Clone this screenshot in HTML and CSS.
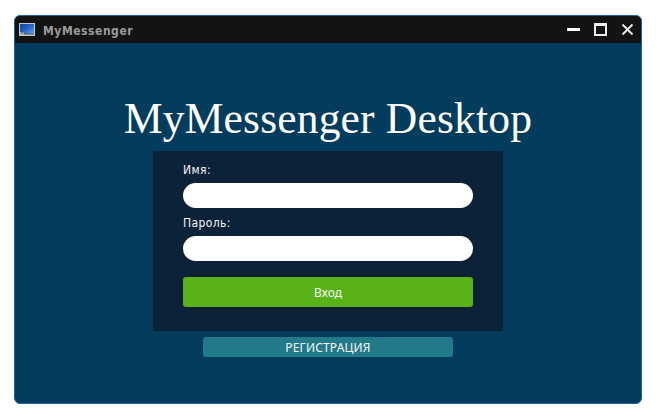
FILE: index.html
```html
<!DOCTYPE html>
<html lang="ru">
<head>
<meta charset="utf-8">
<title>MyMessenger</title>
<link rel="stylesheet" href="styles.css">
</head>
<body>
<main class="window">
  <header class="titlebar">
    <svg class="app-icon" width="16" height="13" viewBox="0 0 16 13">
      <defs><linearGradient id="screen" x1="0" y1="0" x2="1" y2="1"><stop offset="0" stop-color="#123f9c"/><stop offset=".5" stop-color="#2565c5"/><stop offset="1" stop-color="#6fa5e4"/></linearGradient></defs>
      <rect width="16" height="13" fill="#c3cbd0"/>
      <rect x="1" y="1" width="14" height="10" fill="url(#screen)"/>
      <path d="M1 9h3l1 1v2H1z" fill="#a9bcc4"/>
      <path d="M2 10h2M5 11h10" stroke="#3d5263"/>
    </svg>
    <span class="app-name">MyMessenger</span>
    <svg class="controls" width="68" height="14" viewBox="0 0 68 14">
      <path d="M0 5h13v3H0z" fill="#fff"/>
      <path d="M27 0h13v13H27zM29 3v8h9V3z" fill="#eee" fill-rule="evenodd"/>
      <path d="M55.500 1.500l10 10M65.500 1.500l-10 10" stroke="#eee" stroke-width="1.8"/>
    </svg>
  </header>
  <h1 class="heading"><span class="heading-text">MyMessenger Desktop</span></h1>
  <form class="login">
    <label class="label" for="name">Имя:</label>
    <input class="field" id="name" type="text">
    <label class="label" for="password">Пароль:</label>
    <input class="field" id="password" type="password">
    <button class="submit" type="button">Вход</button>
  </form>
  <button class="register" type="button">РЕГИСТРАЦИЯ</button>
</main>
</body>
</html>
```
FILE: styles.css
```css
* { box-sizing: border-box; }
body { margin: 0; background: #fff; font-family: "Noto Sans", sans-serif; }
.window {
  width: 628px;
  height: 389px;
  margin: 15px 0 0 14px;
  border: 1px solid #1c62a6;
  border-radius: 6px;
  background: #033c5d;
  overflow: hidden;
  display: flex;
  flex-direction: column;
  align-items: center;
}
.titlebar {
  width: 100%;
  height: 27px;
  flex: none;
  display: flex;
  align-items: center;
  padding: 0 6px 0 4px;
  background: #131313;
}
.app-name {
  margin: 3px auto 0 8px;
  font: bold 12px/16px "DejaVu Sans Condensed", "DejaVu Sans", sans-serif;
  letter-spacing: 0.55px;
  color: #9b9b9b;
}
.controls { display: block; }
.heading {
  margin: 47px 0 0;
  height: 61px;
  font: 400 43.5px/56px "Liberation Serif", serif;
  letter-spacing: 0.18px;
  white-space: nowrap;
  color: #fff;
}
.login {
  width: 350px;
  height: 180px;
  padding: 10px 30px 0;
  background: #0c2238;
}
.label {
  display: block;
  height: 22px;
  font: 12px/18px "DejaVu Sans Condensed", "DejaVu Sans", sans-serif;
  letter-spacing: 0.4px;
  color: #f2f4f6;
}
.field {
  display: block;
  width: 290px;
  height: 25px;
  margin: 0 0 6px;
  padding: 0 12px;
  border: 0;
  border-radius: 12.5px;
  background: #fff;
}
.submit, .register {
  display: block;
  padding: 2px 0 0;
  border: 0;
  border-radius: 3px;
  color: #f4f8f4;
  font: 12px/18px "Noto Sans", sans-serif;
}
.submit { width: 290px; height: 30px; margin-top: 16px; background: #5ab219; }
.register { width: 250px; height: 20px; margin-top: 6px; background: #227989; letter-spacing: 0.18px; }
```
